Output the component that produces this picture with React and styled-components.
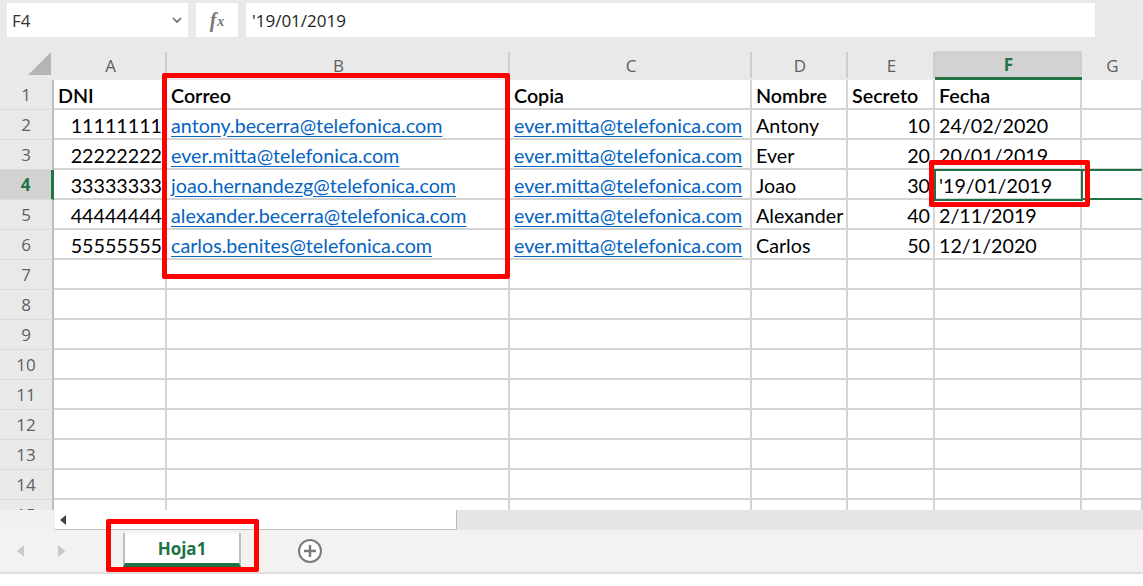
import React from 'react';
import styled, { createGlobalStyle } from 'styled-components';

const GREEN = '#217346';
const GRID = '#d4d4d4';
const HEAD_BG = '#e9e9e9';

const GlobalStyle = createGlobalStyle`
  html, body { margin: 0; padding: 0; background: #fff; }
  body { width: 1143px; height: 586px; overflow: hidden; }
`;

const Screen = styled.div`
  position: relative;
  width: 1143px;
  height: 586px;
  background: #fff;
  overflow: hidden;
  display: flex;
  flex-direction: column;
`;

const FormulaBar = styled.div`
  display: flex;
  height: 50px;
  box-sizing: border-box;
  padding: 3px 48px 13px 7px;
  gap: 8px;
  background: ${HEAD_BG};
`;

const NameBox = styled.div`
  width: 181px;
  background: #fff;
  display: flex;
  align-items: center;
  justify-content: space-between;
  padding: 0 6px 0 5px;
  box-sizing: border-box;
  font-family: "Open Sans", sans-serif;
  font-size: 17px;
  color: #333;
`;

const FxBox = styled.div`
  width: 42px;
  background: #fff;
  display: flex;
  align-items: center;
  justify-content: center;
  font-family: "Liberation Serif", serif;
  font-style: italic;
  font-weight: bold;
  font-size: 20px;
  color: #777;
`;

const FxSub = styled.span`
  font-size: 14px;
  margin-left: 1px;
  position: relative;
  top: 2px;
`;

const FormulaInput = styled.div`
  flex: 1;
  background: #fff;
  display: flex;
  align-items: center;
  padding-left: 6px;
  font-family: "Open Sans", sans-serif;
  font-size: 17px;
  color: #222;
`;

const Sheet = styled.div`
  height: 460px;
  overflow: hidden;
`;

const COLS = '54px 113px 343px 242px 96px 87px 147px 1fr';

const Row = styled.div`
  display: grid;
  grid-template-columns: ${COLS};
  height: 30px;
`;

const HeadRow = styled(Row)`
  background: ${HEAD_BG};
`;

const Corner = styled.div`
  position: relative;
  &::after {
    content: '';
    position: absolute;
    left: 28px;
    top: 2px;
    width: 23px;
    height: 23px;
    background: #b5b5b5;
    clip-path: polygon(100% 0, 100% 100%, 0 100%);
  }
`;

const ColHead = styled.div`
  position: relative;
  display: flex;
  align-items: center;
  justify-content: center;
  font-family: "Open Sans", sans-serif;
  font-size: 17px;
  color: ${p => (p.$active ? GREEN : '#5f5f5f')};
  font-weight: ${p => (p.$active ? 700 : 400)};
  background: ${p => (p.$active ? '#d2d2d2' : 'transparent')};
  margin-top: ${p => (p.$active ? '1px' : '0')};
  border-bottom: ${p => (p.$active ? `3px solid ${GREEN}` : '0')};
  box-sizing: border-box;
  &::after {
    content: '';
    position: absolute;
    right: 0;
    top: 2px;
    bottom: 2px;
    width: 2px;
    background: #cdcdcd;
    display: ${p => (p.$last ? 'none' : 'block')};
  }
`;

const RowHead = styled.div`
  display: flex;
  align-items: center;
  justify-content: center;
  box-sizing: border-box;
  font-family: "Open Sans", sans-serif;
  font-size: 17px;
  color: ${p => (p.$active ? GREEN : '#5f5f5f')};
  font-weight: ${p => (p.$active ? 700 : 400)};
  background: ${p => (p.$active ? '#d2d2d2' : HEAD_BG)};
  border-right: ${p => (p.$active ? `3px solid ${GREEN}` : '2px solid #bdbdbd')};
  border-bottom: 1px solid #d9d9d9;
`;

const Cell = styled.div`
  position: relative;
  display: flex;
  align-items: center;
  justify-content: ${p => (p.$right ? 'flex-end' : 'flex-start')};
  box-sizing: border-box;
  padding: 2px 3px 0 4px;
  border-right: 2px solid ${GRID};
  border-bottom: 2px solid ${GRID};
  font-family: "Lato", sans-serif;
  font-size: 19.7px;
  font-weight: ${p => (p.$bold ? 600 : 400)};
  color: #000;
  white-space: nowrap;
  ${p => p.$selected && `
    outline: 2px solid ${GREEN};
    outline-offset: -1px;
    z-index: 2;
  `}
  ${p => p.$trail && `
    border-top: 2px solid ${GREEN};
    border-bottom: 2px solid ${GREEN};
    margin-top: -1px;
  `}
`;

const Link = styled.span`
  color: #0563c1;
  text-decoration: underline;
  text-underline-offset: 3px;
`;

const ScrollRow = styled.div`
  display: flex;
  height: 20px;
  background: #e6e6e6;
`;

const ScrollGap = styled.div`
  width: 55px;
  background: #f1f1f1;
`;

const ScrollTrack = styled.div`
  width: 402px;
  background: #fff;
  border-right: 1px solid #bdbdbd;
  border-bottom: 1px solid #bdbdbd;
  box-sizing: border-box;
  display: flex;
  align-items: center;
  padding-left: 5px;
`;

const TabBar = styled.div`
  height: 44px;
  box-sizing: border-box;
  background: #f3f2f1;
  border-bottom: 2px solid #dedede;
  display: flex;
  align-items: flex-start;
`;

const NavArrows = styled.div`
  width: 123px;
  height: 36px;
  display: flex;
  align-items: center;
  padding-left: 17px;
  gap: 34px;
  box-sizing: border-box;
  margin-top: 3px;
`;

const Tab = styled.div`
  margin-top: 3px;
  width: 118px;
  height: 34px;
  box-sizing: border-box;
  background: #fff;
  border-left: 2px solid #bdbdbd;
  border-right: 2px solid #bdbdbd;
  border-bottom: 4px solid ${GREEN};
  display: flex;
  align-items: center;
  justify-content: center;
  font-family: "Open Sans", sans-serif;
  font-weight: 700;
  font-size: 17px;
  color: ${GREEN};
`;

const AddSheet = styled.div`
  margin: 8px 0 0 56px;
  display: flex;
`;

const Highlight = styled.div`
  position: absolute;
  border: 5px solid #ff0000;
  box-sizing: border-box;
  border-radius: 2px;
  pointer-events: none;
  z-index: 5;
`;

const Triangle = ({ dir, color, size = 10 }) => (
  <svg width={size * 0.6} height={size} viewBox="0 0 6 10">
    {dir === 'left'
      ? <polygon points="6,0 6,10 0,5" fill={color} />
      : <polygon points="0,0 0,10 6,5" fill={color} />}
  </svg>
);

const columns = ['A', 'B', 'C', 'D', 'E', 'F', 'G'];

const rows = [
  { head: true, vals: ['DNI', 'Correo', 'Copia', 'Nombre', 'Secreto', 'Fecha'] },
  { vals: ['11111111', 'antony.becerra@telefonica.com', 'ever.mitta@telefonica.com', 'Antony', '10', '24/02/2020'] },
  { vals: ['22222222', 'ever.mitta@telefonica.com', 'ever.mitta@telefonica.com', 'Ever', '20', '20/01/2019'] },
  { vals: ['33333333', 'joao.hernandezg@telefonica.com', 'ever.mitta@telefonica.com', 'Joao', '30', "'19/01/2019"], active: true },
  { vals: ['44444444', 'alexander.becerra@telefonica.com', 'ever.mitta@telefonica.com', 'Alexander', '40', '2/11/2019'] },
  { vals: ['55555555', 'carlos.benites@telefonica.com', 'ever.mitta@telefonica.com', 'Carlos', '50', '12/1/2020'] },
];

const emptyRows = Array.from({ length: 9 }, (_, i) => i + 7);

export default function App() {
  return (
    <Screen>
      <GlobalStyle />
      <FormulaBar>
        <NameBox>
          F4
          <svg width="10" height="6" viewBox="0 0 10 6">
            <path d="M1 1l4 4 4-4" stroke="#666" strokeWidth="1.6" fill="none" />
          </svg>
        </NameBox>
        <FxBox>f<FxSub>x</FxSub></FxBox>
        <FormulaInput>'19/01/2019</FormulaInput>
      </FormulaBar>

      <Sheet>
        <HeadRow>
          <Corner />
          {columns.map(c => (
            <ColHead key={c} $active={c === 'F'} $last={c === 'G'}>{c}</ColHead>
          ))}
        </HeadRow>

        {rows.map((r, i) => (
          <Row key={i}>
            <RowHead $active={r.active}>{i + 1}</RowHead>
            {r.vals.map((v, j) => {
              const isLink = !r.head && (j === 1 || j === 2);
              const right = !r.head && (j === 0 || j === 4);
              return (
                <Cell key={j} $right={right} $bold={r.head} $selected={r.active && j === 5}>
                  {isLink ? <Link>{v}</Link> : v}
                </Cell>
              );
            })}
            <Cell $trail={r.active} />
          </Row>
        ))}

        {emptyRows.map(n => (
          <Row key={n}>
            <RowHead>{n}</RowHead>
            {columns.map(c => <Cell key={c} />)}
          </Row>
        ))}
      </Sheet>

      <ScrollRow>
        <ScrollGap />
        <ScrollTrack>
          <Triangle dir="left" color="#444" size={10} />
        </ScrollTrack>
      </ScrollRow>

      <TabBar>
        <NavArrows>
          <Triangle dir="left" color="#c8c8c8" size={12} />
          <Triangle dir="right" color="#c8c8c8" size={12} />
        </NavArrows>
        <Tab>Hoja1</Tab>
        <AddSheet>
          <svg width="26" height="26" viewBox="0 0 26 26">
            <circle cx="13" cy="13" r="11" stroke="#7a7a7a" strokeWidth="2" fill="#fff" />
            <path d="M13 7v12M7 13h12" stroke="#7a7a7a" strokeWidth="2.4" />
          </svg>
        </AddSheet>
      </TabBar>

      <Highlight style={{ left: 162, top: 73, width: 348, height: 206 }} />
      <Highlight style={{ left: 929, top: 160, width: 161, height: 47 }} />
      <Highlight style={{ left: 106, top: 519, width: 153, height: 53 }} />
    </Screen>
  );
}
